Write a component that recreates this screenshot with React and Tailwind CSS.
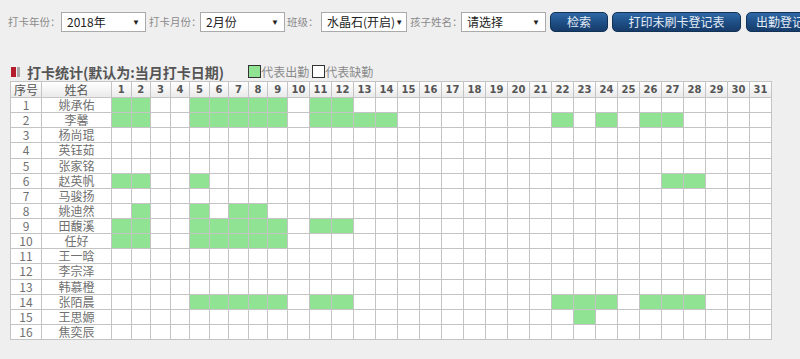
import React from "react";

const rows = [
  ["姚承佑", [1, 2, 5, 6, 7, 8, 9, 11, 12]],
  ["李馨", [1, 2, 5, 6, 7, 8, 9, 11, 12, 13, 14, 22, 24, 26, 27]],
  ["杨尚琨", []],
  ["英钰茹", []],
  ["张家铭", []],
  ["赵英帆", [1, 2, 5, 27, 28]],
  ["马骏扬", []],
  ["姚迪然", [2, 5, 7, 8]],
  ["田馥溪", [1, 2, 5, 6, 7, 8, 9, 11, 12]],
  ["任好", [1, 2, 5, 6, 7, 8, 9]],
  ["王一晗", []],
  ["李宗泽", []],
  ["韩慕橙", []],
  ["张陌晨", [5, 6, 7, 8, 9, 11, 12, 22, 23, 24, 26, 27, 28]],
  ["王思嫄", [23]],
  ["焦奕辰", []],
];

const days = Array.from({ length: 31 }, (_, i) => i + 1);
const cjk = { fontFamily: '"Noto Sans CJK SC", "Noto Sans", sans-serif' };
const num = { fontFamily: '"DejaVu Sans", Verdana, sans-serif' };

function Select({ w, text }) {
  return (
    <div
      className={`${w} shrink-0 h-5 bg-white border border-[#aaaaaa] flex items-center justify-between pl-[5px] pr-[5px]`}
    >
      <span className="text-[12px] text-[#222] leading-none whitespace-nowrap" style={cjk}>
        {text}
      </span>
      <span className="text-[8px] text-[#222] leading-none">▼</span>
    </div>
  );
}

function Label({ w, text }) {
  return (
    <span
      className={`${w} shrink-0 text-[10.5px] text-[#8a8a8a] leading-none whitespace-nowrap`}
      style={cjk}
    >
      {text}
    </span>
  );
}

function Btn({ w, text }) {
  return (
    <div
      className={`${w} h-5 shrink-0 rounded-[5px] border border-[#123256] bg-gradient-to-b from-[#2f68a6] via-[#1f4f87] to-[#163c6a] text-[#e4ecf5] text-[12px] flex items-center justify-center leading-none whitespace-nowrap`}
      style={cjk}
    >
      {text}
    </div>
  );
}

export default function App() {
  return (
    <div className="w-[800px] h-[359px] overflow-hidden bg-[#efefef]">
      <div className="flex items-center h-5 mt-3 pl-[8px] whitespace-nowrap">
        <Label w="w-[53px]" text="打卡年份：" />
        <Select w="w-[85px]" text="2018年" />
        <div className="w-[3px] shrink-0" />
        <Label w="w-[51px]" text="打卡月份：" />
        <Select w="w-[85px]" text="2月份" />
        <div className="w-[2px] shrink-0" />
        <Label w="w-[34px]" text="班级：" />
        <Select w="w-[86px]" text="水晶石(开启)" />
        <div className="w-[3px] shrink-0" />
        <Label w="w-[51px]" text="孩子姓名：" />
        <Select w="w-[85px]" text="请选择" />
        <div className="w-[4px] shrink-0" />
        <Btn w="w-[58px]" text="检索" />
        <div className="w-[4px] shrink-0" />
        <Btn w="w-[129px]" text="打印未刷卡登记表" />
        <div className="w-[5px] shrink-0" />
        <Btn w="w-[80px]" text="出勤登记表" />
      </div>

      <div className="flex items-center h-[19px] mt-[30px] ml-[11px]">
        <div className="w-[5px] h-[10px] bg-[#b51d2d]" />
        <div className="w-[3px] h-[10px] bg-[#a9a9a9] ml-[1px]" />
        <span
          className="ml-[7px] text-[14px] font-bold text-[#555] leading-none whitespace-nowrap"
          style={cjk}
        >
          打卡统计(默认为:当月打卡日期)
        </span>
        <div className="ml-[24px] w-[13px] h-[13px] shrink-0 bg-[#90e393] border border-[#333]" />
        <span className="text-[12px] text-[#8a8a8a] leading-none whitespace-nowrap" style={cjk}>
          代表出勤
        </span>
        <div className="ml-[3px] w-[13px] h-[13px] shrink-0 bg-white border border-[#333]" />
        <span className="text-[12px] text-[#8a8a8a] leading-none whitespace-nowrap" style={cjk}>
          代表缺勤
        </span>
      </div>

      <table className="ml-[10px] w-[761px] table-fixed border-collapse bg-white">
        <colgroup>
          <col style={{ width: 31 }} />
          <col style={{ width: 70 }} />
          {days.map((d) => (
            <col key={d} style={{ width: d <= 9 ? 176 / 9 : 22 }} />
          ))}
        </colgroup>
        <thead>
          <tr className="h-[16px] bg-gradient-to-b from-white to-[#e9e9e9]">
            <th
              className="border border-[#c4c4c4] p-0 text-[12px] font-normal text-[#555] leading-[14px]"
              style={cjk}
            >
              序号
            </th>
            <th
              className="border border-[#c4c4c4] p-0 text-[12px] font-normal text-[#555] leading-[14px]"
              style={cjk}
            >
              姓名
            </th>
            {days.map((d) => (
              <th
                key={d}
                className="border border-[#c4c4c4] p-0 text-[10px] font-bold text-[#555] leading-[14px]"
                style={num}
              >
                {d}
              </th>
            ))}
          </tr>
        </thead>
        <tbody>
          {rows.map(([name, on], i) => (
            <tr key={i} className="h-[15.125px]">
              <td
                className="border border-[#c4c4c4] p-0 text-center text-[12px] text-[#707070] leading-[14px]"
                style={cjk}
              >
                {i + 1}
              </td>
              <td
                className="border border-[#c4c4c4] p-0 text-center text-[12px] text-[#707070] leading-[14px]"
                style={cjk}
              >
                {name}
              </td>
              {days.map((d) => (
                <td
                  key={d}
                  className={`border border-[#c4c4c4] p-0 ${
                    on.includes(d) ? "bg-[#90e393]" : "bg-white"
                  }`}
                />
              ))}
            </tr>
          ))}
        </tbody>
      </table>
    </div>
  );
}
